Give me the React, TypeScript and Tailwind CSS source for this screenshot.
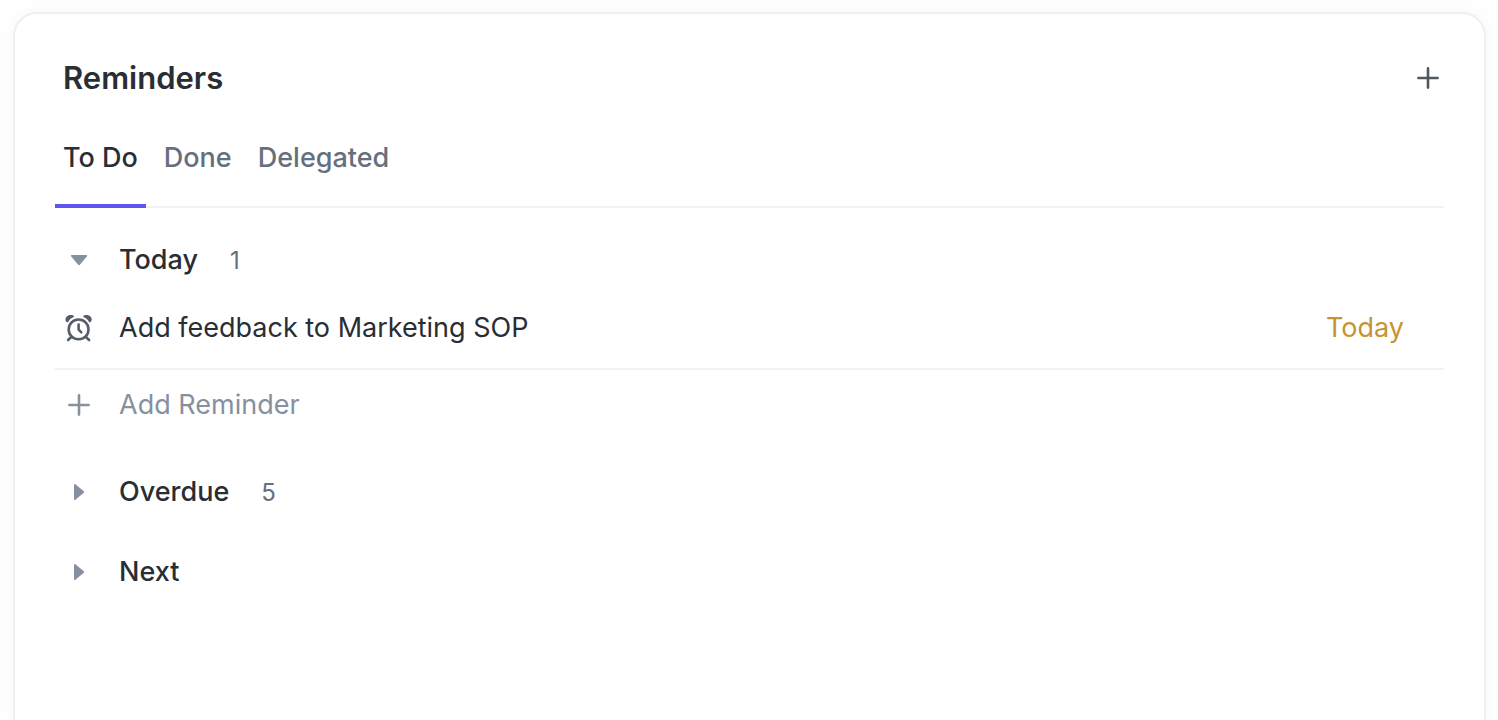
import { useState, type ReactNode } from 'react';

const TABS = ['To Do', 'Done', 'Delegated'];

interface GroupProps {
  title: string;
  count?: number;
  defaultOpen?: boolean;
  children?: ReactNode;
}

function PlusIcon() {
  return (
    <svg width="24" height="24" viewBox="0 0 24 24" fill="none" stroke="currentColor" strokeWidth="2.6" strokeLinecap="round" aria-hidden="true">
      <path d="M12 2.4v19.2M2.4 12h19.2" />
    </svg>
  );
}

function AlarmIcon() {
  return (
    <svg width="28" height="28" viewBox="0 0 28 28" fill="none" stroke="currentColor" strokeWidth="2.6" strokeLinecap="round" strokeLinejoin="round" aria-hidden="true">
      <circle cx="13.6" cy="15.4" r="9.9" />
      <path d="M13.6 10.6v5l2.7 2.8" />
      <path d="M6.2 23l-3.1 3M21 23l3.1 3" />
      <path d="M2.2 8.3C0 7.4-.1 4.200 1.800 2.400 3.900.5 7.800.5 8.800 1.900c.4.6.1 1.100-.5 1.400C6 4.300 4.500 5.700 3.300 7.800c-.2.5-.6.7-1.100.5z" fill="currentColor" stroke="none" />
      <path d="M25 8.300c2.200-.9 2.300-4.100.4-5.900-2.100-1.900-6-1.900-7-.5-.4.6-.1 1.100.5 1.400 2.300 1 3.800 2.400 5 4.500.2.5.6.7 1.100.5z" fill="currentColor" stroke="none" />
    </svg>
  );
}

function Caret({ open }: { open: boolean }) {
  return (
    <svg className="text-[#87909e]" width="24" height="24" viewBox="0 0 24 24" fill="currentColor" aria-hidden="true">
      {open ? (
        <path d="M4.8 7h14.4c.9 0 1.2.8.6 1.4l-6.7 8.1c-.6.7-1.6.7-2.2 0L4.2 8.4C3.6 7.8 3.9 7 4.8 7z" />
      ) : (
        <path d="M7 4.8v14.4c0 .9.8 1.2 1.4.6l8.1-6.7c.7-.6.7-1.6 0-2.2L8.4 4.2C7.8 3.6 7 3.9 7 4.8z" />
      )}
    </svg>
  );
}

function Group({ title, count, defaultOpen = false, children }: GroupProps) {
  const [open, setOpen] = useState(defaultOpen);

  return (
    <section className="mt-6">
      <button
        type="button"
        aria-expanded={open}
        onClick={() => setOpen(!open)}
        className="flex h-14 w-full items-center text-left"
      >
        <span className="flex w-12 justify-center">
          <Caret open={open} />
        </span>
        <span className="ml-4 flex items-baseline gap-8">
          <span className="font-medium">{title}</span>
          {count !== undefined && <span className="text-2xl leading-9 text-[#656f7d]">{count}</span>}
        </span>
      </button>
      {open && children}
    </section>
  );
}

export default function App() {
  const [tab, setTab] = useState('To Do');

  return (
    <main className="flex min-h-screen flex-col bg-[#fefefe] pt-3 pr-3 pl-[13px] font-[Inter,sans-serif] text-[27px] leading-9 text-[#292d34]">
      <div className="flex-1 rounded-t-3xl border-2 border-b-0 border-[#f0f0f0] bg-white px-10 pt-10 pb-8 shadow-[0_0_12px_rgba(0,0,0,0.03)]">
        <header className="flex h-12 items-center justify-between pl-2">
          <h1 className="text-[31px] leading-10 font-semibold">Reminders</h1>
          <button type="button" aria-label="New reminder" className="px-1 text-[#4f5762]">
            <PlusIcon />
          </button>
        </header>

        <nav className="mt-2 flex h-[98px] gap-2.5 border-b-2 border-[#f0f1f3]">
          {TABS.map((name) => (
            <button
              key={name}
              type="button"
              onClick={() => setTab(name)}
              className={`relative px-2 font-medium ${
                tab === name
                  ? 'after:absolute after:inset-x-0 after:-bottom-0.5 after:h-1 after:bg-[#5f55ee]'
                  : 'text-[#656f7d]'
              }`}
            >
              {name}
            </button>
          ))}
        </nav>

        <Group title="Today" count={1} defaultOpen>
          <div className="flex h-[82px] items-center border-b-2 border-[#f0f1f3] pr-10">
            <span className="flex w-12 justify-center text-[#545d69]">
              <AlarmIcon />
            </span>
            <span className="ml-4 flex-1">Add feedback to Marketing SOP</span>
            <span className="text-[#c69333]">Today</span>
          </div>
          <button type="button" className="flex h-[70px] w-full items-center text-left text-[#87909e]">
            <span className="flex w-12 justify-center">
              <PlusIcon />
            </span>
            <span className="ml-4">Add Reminder</span>
          </button>
        </Group>
        <Group title="Overdue" count={5} />
        <Group title="Next" />
      </div>
    </main>
  );
}
